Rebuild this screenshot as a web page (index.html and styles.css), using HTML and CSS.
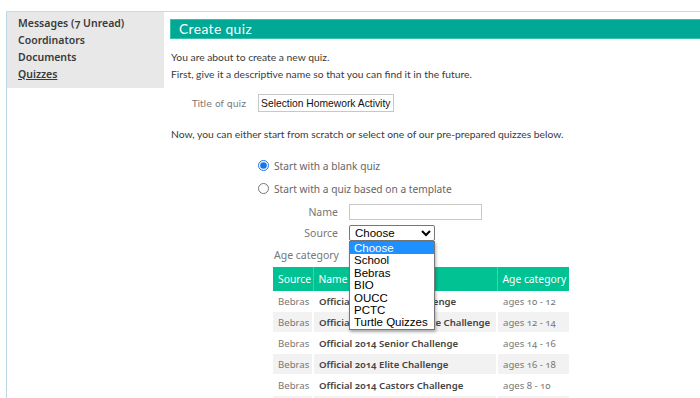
FILE: index.html
```html
<!DOCTYPE html>
<html>
<head>
    <title>Create quiz</title>
    <link rel="stylesheet" href="styles.css">
</head>
<body>
    <div class="page">
        <div class="sidebar">
            <a class="side-link" href="#">Messages (7 Unread)</a>
            <a class="side-link" href="#">Coordinators</a>
            <a class="side-link" href="#">Documents</a>
            <a class="side-link current" href="#">Quizzes</a>
        </div>

        <div class="main">
            <h1 class="title-bar">Create quiz</h1>
            <p class="intro">You are about to create a new quiz.<br>First, give it a descriptive name so that you can find it in the future.</p>

            <div class="title-row">
                <label>Title of quiz</label>
                <input type="text" class="title-input" value="Selection Homework Activity">
            </div>

            <p class="intro">Now, you can either start from scratch or select one of our pre-prepared quizzes below.</p>

            <div class="choices">
                <label class="choice"><input type="radio" name="start" checked> Start with a blank quiz</label>
                <label class="choice"><input type="radio" name="start"> Start with a quiz based on a template</label>

                <div class="filter-grid">
                    <label>Name</label>
                    <input type="text" class="name-input">
                    <label>Source</label>
                    <div class="source-wrap">
                        <select class="source-select">
                            <option>Choose</option>
                        </select>
                        <div class="dropdown">
                            <div class="opt selected">Choose</div>
                            <div class="opt">School</div>
                            <div class="opt">Bebras</div>
                            <div class="opt">BIO</div>
                            <div class="opt">OUCC</div>
                            <div class="opt">PCTC</div>
                            <div class="opt">Turtle Quizzes</div>
                        </div>
                    </div>
                </div>

                <div class="age-label">Age category</div>

                <table class="quiz-table">
                    <colgroup>
                        <col class="col-source">
                        <col class="col-name">
                        <col class="col-age">
                    </colgroup>
                    <thead>
                        <tr>
                            <th>Source</th>
                            <th>Name</th>
                            <th>Age category</th>
                        </tr>
                    </thead>
                    <tbody>
                        <tr><td>Bebras</td><td class="qname">Official 2014 Junior Challenge</td><td>ages 10 - 12</td></tr>
                        <tr><td>Bebras</td><td class="qname">Official 2014 Intermediate Challenge</td><td>ages 12 - 14</td></tr>
                        <tr><td>Bebras</td><td class="qname">Official 2014 Senior Challenge</td><td>ages 14 - 16</td></tr>
                        <tr><td>Bebras</td><td class="qname">Official 2014 Elite Challenge</td><td>ages 16 - 18</td></tr>
                        <tr><td>Bebras</td><td class="qname">Official 2014 Castors Challenge</td><td>ages 8 - 10</td></tr>
                        <tr><td>Bebras</td><td class="qname">Official 2013 Junior Challenge</td><td>ages 10 - 12</td></tr>
                    </tbody>
                </table>
            </div>
        </div>
    </div>
</body>
</html>
```

FILE: styles.css
```css
body {
    margin: 0;
    background: #fff;
    font-family: Lato, "Open Sans", Arial, sans-serif;
    font-size: 11px;
    color: #333;
    overflow: hidden;
}
.page {
    display: flex;
    align-items: flex-start;
    margin: 11px 0 0 6px;
    border-top: 1px solid #c6dde3;
    border-left: 1px solid #bcd8e6;
    min-height: 420px;
}
.sidebar {
    width: 135px;
    flex-shrink: 0;
    background: #e8e8e8;
    padding: 3px 11px 5px 11px;
    display: flex;
    flex-direction: column;
}
.side-link {
    font-family: "Noto Sans", Lato, sans-serif;
    font-weight: 600;
    font-size: 10.5px;
    line-height: 17px;
    color: #3a3a3a;
    text-decoration: none;
    font-variant-numeric: oldstyle-nums;
}
.side-link.current {
    text-decoration: underline;
}
.main {
    flex: 1;
    margin-left: 6px;
    padding-top: 7px;
}
.title-bar {
    margin: 0;
    background: #00a896;
    border: 1px solid #3cc0ae;
    border-right: none;
    height: 18px;
    line-height: 18px;
    padding-left: 8px;
    color: #fff;
    font-family: Lato, "Noto Sans", sans-serif;
    font-weight: normal;
    font-size: 13.8px;
    letter-spacing: 0.4px;
}
.intro {
    margin: 10px 0 0 1px;
    line-height: 17px;
    font-size: 10.3px;
    color: #3a3a3a;
}
.title-row {
    display: flex;
    align-items: center;
    gap: 12px;
    margin: 11px 0 0 22px;
}
.title-row label {
    font-family: "DejaVu Sans", sans-serif;
    font-size: 9.3px;
    color: #777;
}
.title-input {
    width: 130px;
    height: 14px;
    padding: 1px 2px;
    border: 1px solid #c8c8c8;
    font-family: Arial, "Liberation Sans", sans-serif;
    font-size: 10.3px;
    color: #111;
}
.title-row + .intro {
    margin-top: 14px;
}
.choices {
    margin: 11px 0 0 88px;
    position: relative;
}
.choice {
    display: flex;
    align-items: center;
    height: 23px;
    font-family: "Noto Sans", Lato, sans-serif;
    font-size: 10.2px;
    color: #666;
}
.choice input {
    margin: 0 5px 0 0;
    width: 11px;
    height: 11px;
    accent-color: #1a73e8;
}
.filter-grid {
    display: grid;
    grid-template-columns: 80px auto;
    column-gap: 11px;
    row-gap: 5px;
    align-items: center;
    margin-top: 4px;
}
.filter-grid > label {
    text-align: right;
    font-family: "Noto Sans", Lato, sans-serif;
    font-size: 10.5px;
    color: #777;
}
.name-input {
    width: 129px;
    height: 14px;
    padding: 0 1px;
    border: 1px solid #c8c8c8;
    justify-self: start;
}
.source-wrap {
    position: relative;
    justify-self: start;
}
.source-select {
    display: block;
    width: 86px;
    height: 16px;
    padding: 0 1px;
    border: 1px solid #767676;
    border-radius: 2px;
    font-family: Arial, "Liberation Sans", sans-serif;
    font-size: 11.5px;
    color: #000;
    background: #fff;
}
.dropdown {
    position: absolute;
    left: 0;
    top: 16px;
    width: 84px;
    background: #fff;
    border: 1px solid #767676;
    box-shadow: 1px 2px 3px rgba(0, 0, 0, 0.3);
    z-index: 5;
    font-family: Arial, "Liberation Sans", sans-serif;
    font-size: 11.5px;
    color: #000;
}
.opt {
    height: 12.4px;
    line-height: 12.4px;
    padding-left: 4px;
}
.opt.selected {
    background: #1e90ff;
    color: #fff;
}
.age-label {
    margin: 7px 0 0 16px;
    font-family: "Noto Sans", Lato, sans-serif;
    font-size: 10.5px;
    color: #777;
    line-height: 14px;
}
.quiz-table {
    margin: 5px 0 0 15px;
    width: 296px;
    table-layout: fixed;
    border-collapse: collapse;
    font-family: "Noto Sans", Lato, sans-serif;
    font-size: 9.6px;
    font-variant-numeric: oldstyle-nums;
}
.col-source {
    width: 40px;
}
.col-name {
    width: 184px;
}
.col-age {
    width: 72px;
}
.quiz-table th {
    background: #00c292;
    color: #fff;
    font-weight: normal;
    text-align: left;
    height: 24px;
    padding: 0 5px;
    border-left: 1px solid #40d2ae;
    font-size: 10.3px;
    white-space: nowrap;
}
.quiz-table th:first-child {
    border-left: none;
}
.quiz-table td {
    height: 20px;
    padding: 0 5px;
    color: #777;
    border-left: 2px solid #fff;
    border-bottom: 1px solid #fff;
    white-space: nowrap;
    overflow: hidden;
}
.quiz-table td:first-child {
    border-left: none;
}
.quiz-table tbody tr:nth-child(even) td {
    background: #f2f2f2;
}
.quiz-table td.qname {
    font-weight: 600;
    color: #444;
}
```
